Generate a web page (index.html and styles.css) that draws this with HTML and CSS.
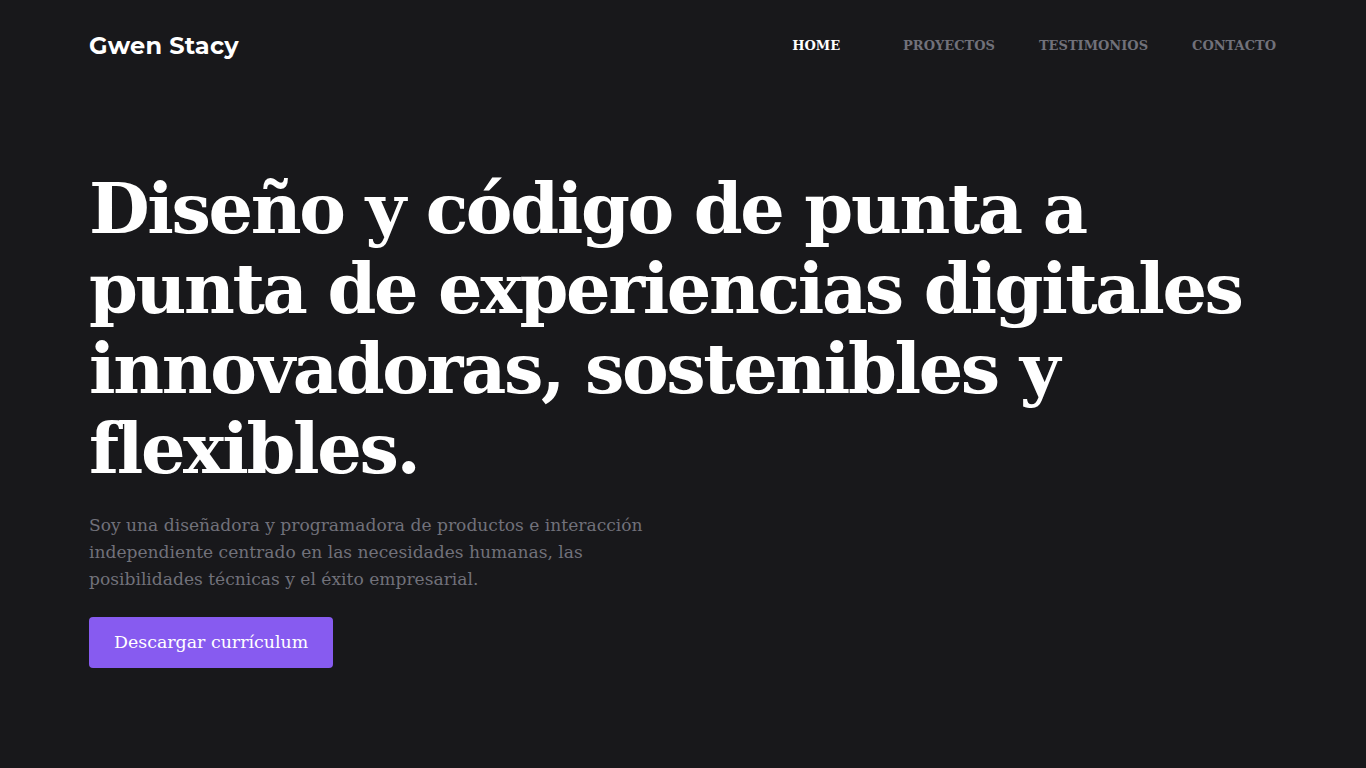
FILE: index.html
```html
<!DOCTYPE html>
<html lang="es">
<head>
<meta charset="utf-8">
<title>Gwen Stacy</title>
<link rel="stylesheet" href="styles.css">
</head>
<body>
<div class="page">
  <header class="nav">
    <a class="logo" href="#">Gwen Stacy</a>
    <nav class="links">
      <a class="link active" href="#">HOME</a>
      <a class="link" href="#">PROYECTOS</a>
      <a class="link" href="#">TESTIMONIOS</a>
      <a class="link" href="#">CONTACTO</a>
    </nav>
  </header>
  <main class="hero">
    <h1 class="title">Diseño y código de punta a<br>punta de experiencias digitales<br>innovadoras, sostenibles y<br>flexibles.</h1>
    <p class="lead">Soy una diseñadora y programadora de productos e interacción independiente centrado en las necesidades humanas, las posibilidades técnicas y el éxito empresarial.</p>
    <a class="btn" href="#">Descargar currículum</a>
  </main>
</div>
</body>
</html>
```
FILE: styles.css
```css
* { box-sizing: border-box; }
html, body { margin: 0; padding: 0; background: #18181b; }
body { font-family: "DejaVu Serif", serif; color: #ffffff; }
a { text-decoration: none; }
.page { padding: 0 90px 0 89px; min-height: 768px; }
.nav { display: flex; align-items: center; justify-content: space-between; height: 90px; }
.logo { font-family: "Montserrat", "Inter", "Open Sans", sans-serif; font-weight: 700; font-size: 24px; color: #fff; letter-spacing: 0.2px; }
.links { display: flex; align-items: center; }
.link { font-family: "DejaVu Serif", serif; font-size: 13px; font-weight: 700; color: #71717a; margin-left: 44px; }
.link.active { color: #fff; margin-right: 19px; }
.hero { padding-top: 79px; }
.title { margin: 0; font-size: 70px; line-height: 80px; font-weight: 700; letter-spacing: -2.4px; white-space: nowrap; }
.lead { margin: 23px 0 0; max-width: 580px; font-size: 17.1px; line-height: 27px; color: #71717a; }
.btn { display: inline-block; margin-top: 24px; background: #875bf0; color: #fff; border-radius: 4px; font-size: 17.4px; height: 51px; line-height: 51px; padding: 0 25px; }
```
